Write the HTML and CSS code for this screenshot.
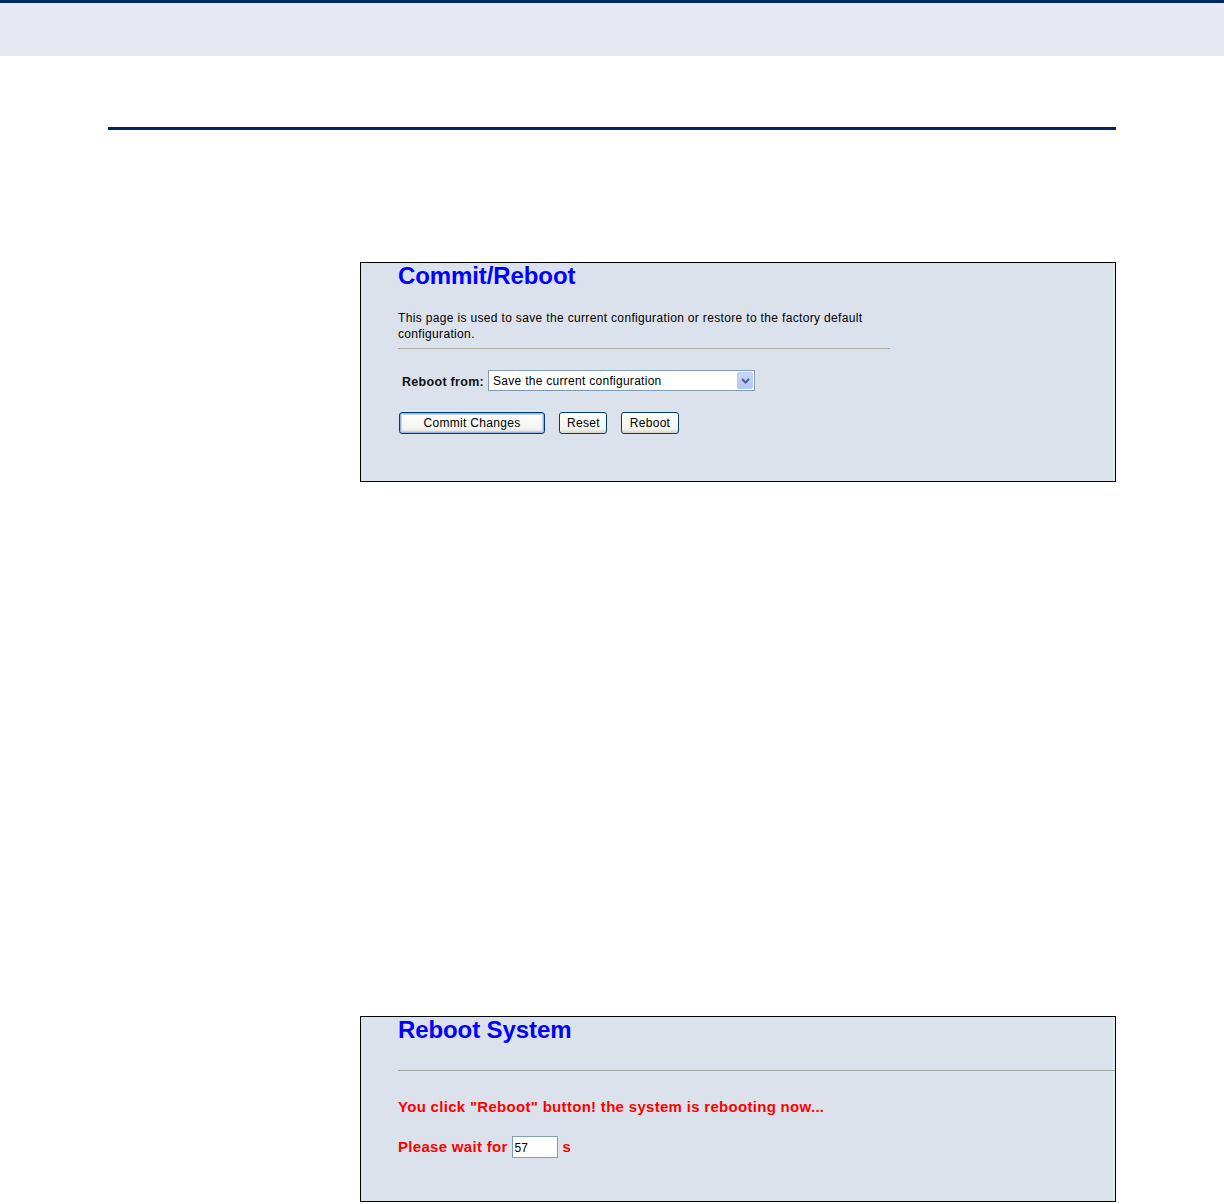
FILE: index.html
```html
<!DOCTYPE html>
<html lang="en">

<head>
    <meta charset="UTF-8">
    <title>Commit/Reboot</title>
    <link rel="stylesheet" href="styles.css">
</head>

<body>

    <div class="top-band"></div>
    <div class="rule"></div>

    <div class="panel panel-commit">
        <h1>Commit/Reboot</h1>
        <p class="desc">This page is used to save the current configuration or restore to the factory default<br>configuration.</p>
        <hr class="sep short">
        <div class="form-row">
            <label class="field-label" for="rebootFrom">Reboot from:</label>
            <div class="select">
                <span class="select-text">Save the current configuration</span>
                <span class="select-arrow">
                    <svg width="9" height="6" viewBox="0 0 9 6">
                        <path d="M1 1 L4.5 4.5 L8 1" fill="none" stroke="#4d6185" stroke-width="2"/>
                    </svg>
                </span>
            </div>
        </div>
        <div class="buttons">
            <button class="btn btn-default">Commit Changes</button>
            <button class="btn btn-reset">Reset</button>
            <button class="btn btn-reboot">Reboot</button>
        </div>
    </div>

    <div class="panel panel-reboot">
        <h1>Reboot System</h1>
        <hr class="sep long">
        <p class="warn">You click "Reboot" button! the system is rebooting now...</p>
        <p class="warn wait">Please wait for <span class="count">57</span> s</p>
    </div>

</body>

</html>
```

FILE: styles.css
```css
body {
    margin: 0;
    background: #fff;
    font-family: "Liberation Sans", Arial, sans-serif;
    color: #000;
}

.top-band {
    height: 53px;
    background: #e6e9f2;
    border-top: 3px solid #002664;
}

.rule {
    height: 3px;
    margin: 71px 0 0 108px;
    width: 1008px;
    background: #002664;
}

.panel {
    box-sizing: border-box;
    width: 756px;
    margin-left: 360px;
    background: #dbe2ec;
    border: 1px solid #000;
    box-shadow: inset -2px 0 0 #e4e9f0;
    padding-left: 37px;
}

.panel-commit {
    margin-top: 132px;
    height: 220px;
}

.panel-reboot {
    margin-top: 534px;
    height: 186px;
}

.panel h1 {
    margin: 0;
    font-size: 24px;
    line-height: 26px;
    font-weight: bold;
    color: #0000ff;
    letter-spacing: -0.1px;
}

.desc {
    margin: 21px 0 0;
    font-size: 12px;
    line-height: 16px;
    letter-spacing: 0.34px;
}

.sep {
    border: 0;
    height: 1px;
    margin: 0;
}

.sep.short {
    margin-top: 6px;
    width: 492px;
    background: #aba99b;
}

.sep.long {
    margin-top: 27px;
    background: #a4a6a6;
}

.form-row {
    display: flex;
    align-items: center;
    margin-top: 21px;
    padding-left: 4px;
}

.field-label {
    font-size: 12.5px;
    font-weight: bold;
    color: #111;
    letter-spacing: 0.3px;
    margin-right: 4px;
    padding-top: 2px;
}

.select {
    box-sizing: border-box;
    width: 267px;
    height: 21px;
    background: #fff;
    border: 1px solid #7f9db9;
    display: flex;
    align-items: center;
    justify-content: space-between;
    padding: 0 1px 0 4px;
}

.select-text {
    font-size: 12px;
    letter-spacing: 0.28px;
}

.select-arrow {
    box-sizing: border-box;
    width: 16px;
    height: 17px;
    background: linear-gradient(#c6d6fb, #b4c8f6);
    border: 1px solid #b9caf1;
    border-radius: 2px;
    display: flex;
    align-items: center;
    justify-content: center;
}

.buttons {
    display: flex;
    gap: 14px;
    margin-top: 21px;
    padding-left: 1px;
}

.btn {
    box-sizing: border-box;
    height: 22px;
    padding: 0 7px;
    font-family: "Liberation Sans", Arial, sans-serif;
    font-size: 12px;
    letter-spacing: 0.3px;
    color: #000;
    background: linear-gradient(#fff, #f3f3ee 80%, #d8d6cc);
    border: 1px solid #003c74;
    border-radius: 3px;
}

.btn-default {
    width: 146px;
    box-shadow: inset 0 0 0 1px #97b3e4, inset 0 0 0 2px #c2d4f4;
}

.btn-reset {
    width: 48px;
}

.btn-reboot {
    width: 58px;
}

.warn {
    margin: 0;
    font-size: 15px;
    font-weight: bold;
    color: #ff0000;
    line-height: 18px;
    letter-spacing: 0.3px;
}

.panel-reboot .warn {
    margin-top: 27px;
}

.panel-reboot .wait {
    margin-top: 20px;
    display: flex;
    align-items: center;
}

.count {
    box-sizing: border-box;
    display: inline-block;
    width: 46px;
    height: 22px;
    margin: 0 5px 0 4px;
    padding: 2px 2px 0;
    background: #fff;
    border: 1px solid #7f9db9;
    font-size: 12px;
    font-weight: normal;
    letter-spacing: 0;
    color: #000;
}
```
